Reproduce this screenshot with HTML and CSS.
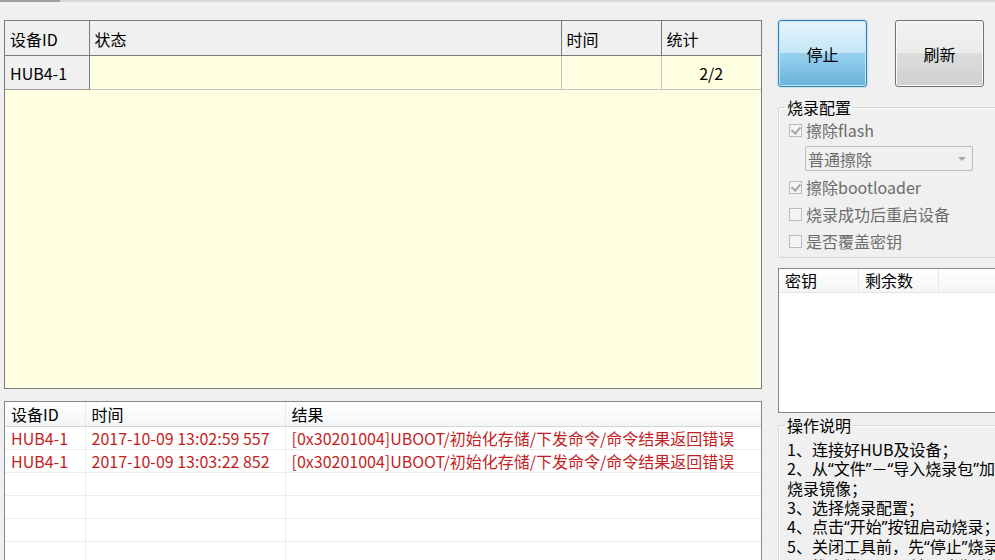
FILE: index.html
```html
<!DOCTYPE html>
<html lang="zh-CN">
<head>
    <meta charset="UTF-8">
    <title>烧录工具</title>
    <link rel="stylesheet" href="styles.css">
</head>
<body>
    <div class="topbar"></div>
    <div class="main">
        <div class="left">
            <div class="status-box">
                <table class="status-table">
                    <colgroup>
                        <col style="width: 84px">
                        <col style="width: 472px">
                        <col style="width: 100px">
                        <col style="width: 100px">
                    </colgroup>
                    <tr>
                        <th>设备ID</th>
                        <th>状态</th>
                        <th>时间</th>
                        <th>统计</th>
                    </tr>
                    <tr>
                        <td class="dev">HUB4-1</td>
                        <td></td>
                        <td></td>
                        <td class="count">2/2</td>
                    </tr>
                </table>
            </div>

            <div class="log-box">
                <table class="log-table">
                    <colgroup>
                        <col style="width: 80px">
                        <col style="width: 200px">
                        <col>
                    </colgroup>
                    <tr>
                        <th>设备ID</th>
                        <th>时间</th>
                        <th>结果</th>
                    </tr>
                    <tr class="err">
                        <td>HUB4-1</td>
                        <td>2017-10-09 13:02:59 557</td>
                        <td>[0x30201004]UBOOT/初始化存储/下发命令/命令结果返回错误</td>
                    </tr>
                    <tr class="err">
                        <td>HUB4-1</td>
                        <td>2017-10-09 13:03:22 852</td>
                        <td>[0x30201004]UBOOT/初始化存储/下发命令/命令结果返回错误</td>
                    </tr>
                    <tr><td></td><td></td><td></td></tr>
                    <tr><td></td><td></td><td></td></tr>
                    <tr><td></td><td></td><td></td></tr>
                    <tr><td></td><td></td><td></td></tr>
                </table>
            </div>
        </div>

        <div class="right">
            <div class="buttons">
                <button class="btn btn-active">停止</button>
                <button class="btn">刷新</button>
            </div>

            <fieldset class="group config">
                <legend>烧录配置</legend>
                <div class="check-row">
                    <span class="checkbox checked"></span>擦除flash
                </div>
                <div class="combo">
                    <span>普通擦除</span>
                    <span class="combo-arrow"></span>
                </div>
                <div class="check-row">
                    <span class="checkbox checked"></span>擦除bootloader
                </div>
                <div class="check-row">
                    <span class="checkbox"></span>烧录成功后重启设备
                </div>
                <div class="check-row">
                    <span class="checkbox"></span>是否覆盖密钥
                </div>
            </fieldset>

            <div class="key-box">
                <div class="key-head">
                    <div class="key-col">密钥</div>
                    <div class="key-col">剩余数</div>
                </div>
            </div>

            <fieldset class="group help">
                <legend>操作说明</legend>
                <div class="help-text">
                    <div>1、连接好HUB及设备；</div>
                    <div>2、从<span class="q">“</span>文件<span class="q">”</span>－<span class="q">“</span>导入烧录包<span class="q">”</span>加载</div>
                    <div>烧录镜像；</div>
                    <div>3、选择烧录配置；</div>
                    <div>4、点击<span class="q">“</span>开始<span class="q">”</span>按钮启动烧录；</div>
                    <div>5、关闭工具前，先<span class="q">“</span>停止<span class="q">”</span>烧录</div>
                    <div>6、拔出外置HUB前，请先<span class="q">“</span>停止<span class="q">”</span></div>
                </div>
            </fieldset>
        </div>
    </div>
</body>
</html>
```

FILE: styles.css
```css
* {
    margin: 0;
    padding: 0;
    box-sizing: border-box;
}

html, body {
    width: 995px;
    height: 560px;
    overflow: hidden;
}

body {
    font-family: "Noto Sans CJK SC", "Noto Sans", sans-serif;
    font-size: 16px;
    color: #000;
    background: #f0f0f0;
}

.topbar {
    height: 2px;
    background: linear-gradient(to right, #a0a0a4 0, #a0a0a4 60px, #d8d8e0 60px);
}

.main {
    display: flex;
    gap: 16px;
    padding: 18px 0 0 4px;
}

.left {
    width: 758px;
    flex-shrink: 0;
}

.right {
    width: 240px;
    flex-shrink: 0;
}

/* device status grid */
.status-box {
    height: 369px;
    border: 1px solid #7a7a7a;
    background: #ffffe1;
}

.status-table {
    border-collapse: collapse;
    table-layout: fixed;
    width: 756px;
}

.status-table th {
    height: 34px;
    padding: 2px 5px 0;
    background: #f0f0f0;
    border-right: 1px solid #7a7a7a;
    border-bottom: 1px solid #7a7a7a;
    font-weight: normal;
    text-align: left;
    line-height: 20px;
}

.status-table th:last-child {
    border-right: none;
}

.status-table td {
    height: 34px;
    padding: 2px 5px 0;
    border-right: 1px solid #c4c4bc;
    border-bottom: 1px solid #c4c4bc;
    line-height: 20px;
}

.status-table td:last-child {
    border-right: none;
}

.status-table td.dev {
    background: #f0f0f0;
    border-right: 1px solid #7a7a7a;
    border-bottom: 1px solid #9a9a9a;
}

.status-table td.count {
    text-align: center;
}

/* result log */
.log-box {
    margin-top: 12px;
    height: 180px;
    border: 1px solid #828790;
    background: #fff;
}

.log-table {
    border-collapse: collapse;
    table-layout: fixed;
    width: 100%;
}

.log-table th {
    height: 24px;
    padding: 0 6px;
    font-weight: normal;
    text-align: left;
    line-height: 22px;
    background: linear-gradient(#ffffff, #f3f5f7);
    border-right: 1px solid #e8eaec;
    border-bottom: 1px solid #d5d5d5;
}

.log-table td {
    height: 23px;
    padding: 0 6px;
    line-height: 22px;
    white-space: nowrap;
    overflow: hidden;
    border-right: 1px solid #ececec;
    border-bottom: 1px solid #ececec;
}

.log-table th:last-child,
.log-table td:last-child {
    border-right: none;
}

.log-table tr.err td {
    color: #c41e24;
}

/* buttons */
.buttons {
    display: flex;
    gap: 28px;
}

.btn {
    width: 89px;
    height: 67px;
    font-family: inherit;
    font-size: 16px;
    color: #000;
    border: 1px solid #707070;
    border-radius: 3px;
    background: linear-gradient(#f2f2f2 0%, #ebebeb 50%, #dddddd 50%, #cfcfcf 100%);
    box-shadow: inset 0 0 0 1px #fcfcfc;
}

.btn-active {
    border-color: #3c7fb1;
    background: linear-gradient(#e5f4fc 0%, #c4e5f6 50%, #98d1ef 50%, #68b3db 100%);
    box-shadow: inset 0 0 0 1px #c0e6f8, 0 0 2px #6fc6f0;
}

/* group boxes */
.group {
    border: 1px solid #d5d5d5;
    border-radius: 3px;
    padding: 0 0 6px 6px;
    min-width: 0;
    box-shadow: inset 1px 1px 0 #fff;
}

.group legend {
    padding: 0 2px;
    line-height: 20px;
}

.config {
    margin-top: 10px;
}

.check-row {
    display: flex;
    align-items: center;
    height: 20px;
    padding-left: 4px;
    color: #6d6d6d;
    line-height: 20px;
    margin-top: 6px;
}

.config .check-row:first-of-type {
    margin-top: 3px;
}

.check-row + .check-row {
    margin-top: 7px;
}

.checkbox {
    position: relative;
    width: 13px;
    height: 13px;
    margin-right: 4px;
    border: 1px solid #bcbcbc;
    background: #f4f4f4;
}

.checkbox.checked::after {
    content: "";
    position: absolute;
    left: 3px;
    top: 0;
    width: 4px;
    height: 7px;
    border-right: 2px solid #a8a8a8;
    border-bottom: 2px solid #a8a8a8;
    transform: rotate(40deg);
}

.combo {
    display: flex;
    align-items: center;
    justify-content: space-between;
    width: 168px;
    height: 25px;
    margin: 6px 0 0 20px;
    padding: 0 6px 0 2px;
    border: 1px solid #bcbcbc;
    border-radius: 2px;
    background: #f0f0f0;
    color: #6d6d6d;
    line-height: 22px;
}

.combo-arrow {
    width: 0;
    height: 0;
    border-left: 4px solid transparent;
    border-right: 4px solid transparent;
    border-top: 4px solid #a6a6a6;
}

/* key list */
.key-box {
    margin-top: 10px;
    height: 145px;
    border: 1px solid #828790;
    background: #fff;
}

.key-head {
    display: flex;
    height: 24px;
    background: linear-gradient(#ffffff, #f3f5f7);
    border-bottom: 1px solid #e2e4e6;
}

.key-col {
    width: 80px;
    padding: 0 6px;
    line-height: 22px;
    border-right: 1px solid #e4e6e8;
}

/* help text */
.help {
    margin-top: 2px;
    height: 200px;
}

.help-text {
    padding: 5px 0 0 2px;
    line-height: 19px;
    white-space: nowrap;
}

.q {
    font-family: "Noto Sans", sans-serif;
}
```
